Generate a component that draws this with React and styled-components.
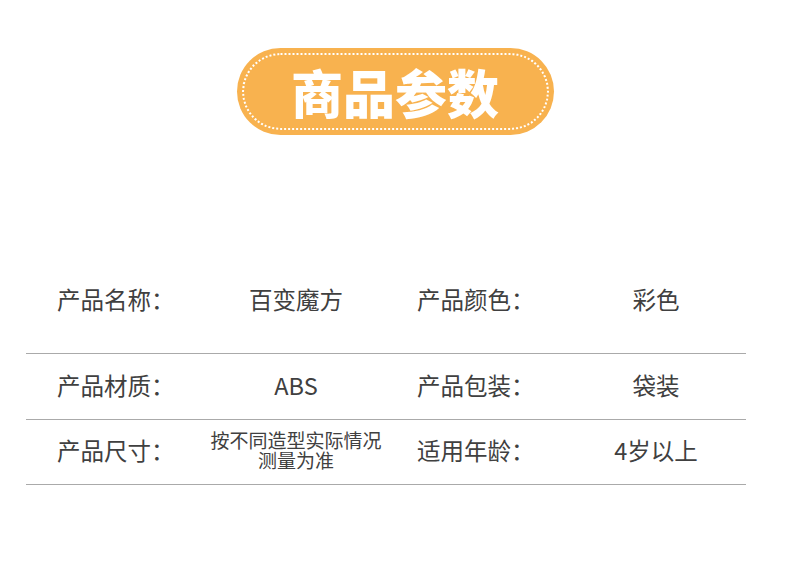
import React from 'react'
import styled, { createGlobalStyle } from 'styled-components'

const GlobalStyle = createGlobalStyle`
  body {
    margin: 0;
    background: #ffffff;
    font-family: 'Noto Sans CJK SC', 'Noto Sans', sans-serif;
  }
`

const Page = styled.div`
  width: 790px;
  height: 583px;
  background: #ffffff;
  display: flex;
  flex-direction: column;
  align-items: center;
  padding-top: 48px;
  box-sizing: border-box;
`

const Pill = styled.div`
  width: 317px;
  height: 87px;
  border-radius: 44px;
  background: #f8b24f;
  padding: 5px;
  box-sizing: border-box;
`

const PillInner = styled.div`
  height: 100%;
  border-radius: 39px;
  border: 2px dotted #ffffff;
  box-sizing: border-box;
  display: flex;
  align-items: center;
  justify-content: center;
`

const Title = styled.h1`
  margin: 0;
  color: #ffffff;
  font-size: 52px;
  font-weight: 900;
  line-height: 1;
  letter-spacing: 0;
`

const Table = styled.div`
  width: 720px;
  margin-top: 133px;
  margin-left: 26px;
  align-self: flex-start;
  display: flex;
  flex-direction: column;
`

const Row = styled.div`
  display: grid;
  grid-template-columns: repeat(4, 180px);
  align-items: center;
  box-sizing: border-box;
  height: ${(props) => (props.first ? '86px' : '65.5px')};
  padding-bottom: ${(props) => (props.first ? '24px' : '3px')};
  border-bottom: 1px solid #aaaaaa;
`

const Label = styled.div`
  padding-left: 31px;
  font-size: 23.5px;
  color: #404040;
  white-space: nowrap;
`

const Value = styled.div`
  text-align: center;
  font-size: ${(props) => (props.small ? '19px' : '23.5px')};
  line-height: ${(props) => (props.small ? '20px' : 'normal')};
  color: #404040;
`

const rows = [
  ['产品名称：', '百变魔方', '产品颜色：', '彩色'],
  ['产品材质：', 'ABS', '产品包装：', '袋装'],
  ['产品尺寸：', '按不同造型实际情况\n测量为准', '适用年龄：', '4岁以上'],
]

function App() {
  return (
    <>
      <GlobalStyle />
      <Page>
        <Pill>
          <PillInner>
            <Title>商品参数</Title>
          </PillInner>
        </Pill>
        <Table>
          {rows.map((row, i) => (
            <Row key={i} first={i === 0 ? 1 : 0}>
              <Label>{row[0]}</Label>
              {row[1].includes('\n') ? (
                <Value small>
                  {row[1].split('\n').map((line) => (
                    <div key={line}>{line}</div>
                  ))}
                </Value>
              ) : (
                <Value>{row[1]}</Value>
              )}
              <Label>{row[2]}</Label>
              <Value>{row[3]}</Value>
            </Row>
          ))}
        </Table>
      </Page>
    </>
  )
}

export default App
